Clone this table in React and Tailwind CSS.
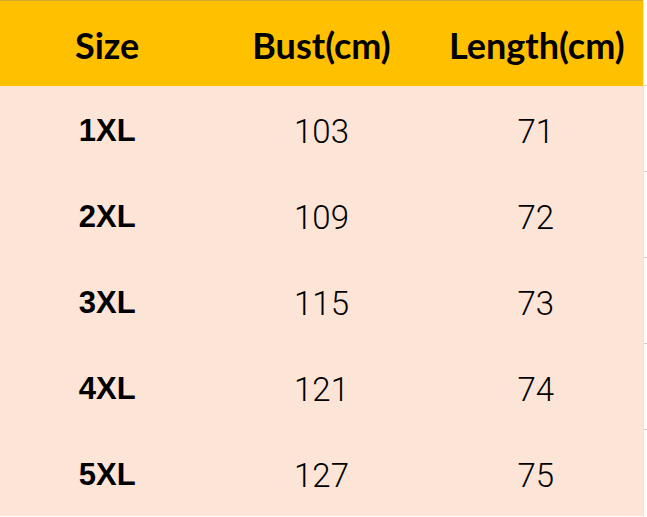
export default function App() {
  const rows = [
    ["1XL", "103", "71"],
    ["2XL", "109", "72"],
    ["3XL", "115", "73"],
    ["4XL", "121", "74"],
    ["5XL", "127", "75"],
  ];
  return (
    <div className="w-[647px] h-[517px] overflow-hidden bg-white flex">
      <div className="w-[643px] flex flex-col">
        <div className="h-[86px] bg-[#FFC000] border-t border-[#d6a82c] grid grid-cols-3 items-center text-black font-bold text-[36px] pt-[3px]" style={{ fontFamily: "Lato, 'Open Sans', sans-serif" }}>
          <div className="text-center">Size</div>
          <div className="text-center">Bust(cm)</div>
          <div className="text-center pl-[2px]">Length(cm)</div>
        </div>
        {rows.map((r, i) => (
          <div key={i} className="h-[86px] bg-[#FCE4D6] grid grid-cols-3 items-center text-black pt-[5px]">
            <div className="text-center font-bold text-[31px]" style={{ fontFamily: "'Liberation Sans', Arial, sans-serif" }}>{r[0]}</div>
            <div className="text-center font-light text-[33px]" style={{ fontFamily: "Roboto, sans-serif" }}>{r[1]}</div>
            <div className="text-center font-light text-[33px]" style={{ fontFamily: "Roboto, sans-serif" }}>{r[2]}</div>
          </div>
        ))}
      </div>
      <div className="flex-1 flex flex-col border-l border-[#e6e6e6]">
        <div className="h-[86px] border-b border-[#d0d0d0]" />
        <div className="h-[86px] border-b border-[#d0d0d0]" />
        <div className="h-[86px] border-b border-[#d0d0d0]" />
        <div className="h-[86px] border-b border-[#d0d0d0]" />
        <div className="h-[86px] border-b border-[#d0d0d0]" />
        <div className="flex-1" />
      </div>
    </div>
  );
}
